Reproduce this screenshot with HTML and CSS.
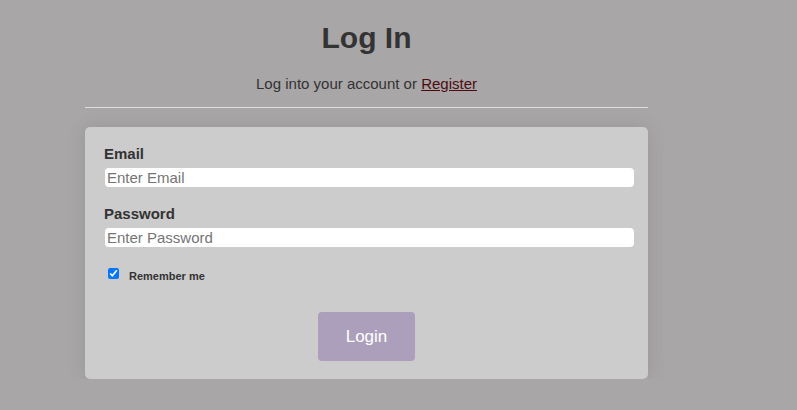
FILE: index.html
```html
<!DOCTYPE html>
<html lang="en">
<head>
<meta charset="utf-8">
<meta name="viewport" content="width=device-width, initial-scale=1">
<title>Log In</title>
<link rel="stylesheet" href="styles.css">
</head>
<body>
<main class="container">
  <header class="intro">
    <h1>Log In</h1>
    <p>Log into your account or <a href="#">Register</a></p>
  </header>
  <form class="card">
    <div class="field">
      <label for="email">Email</label>
      <input type="email" id="email" placeholder="Enter Email">
    </div>
    <div class="field">
      <label for="password">Password</label>
      <input type="password" id="password" placeholder="Enter Password">
    </div>
    <div class="remember">
      <input type="checkbox" id="remember" checked>
      <label for="remember">Remember me</label>
    </div>
    <button type="submit" class="submit">Login</button>
  </form>
</main>
</body>
</html>
```

FILE: styles.css
```css
* {
  box-sizing: border-box;
}

body {
  margin: 0;
  background: #a8a6a7;
  color: #333;
  font: 15px/20px "Liberation Sans", Arial, sans-serif;
}

.container {
  margin: 0 149px 0 85px;
  padding-top: 20px;
}

.intro {
  border-bottom: 1px solid #ddd;
  padding-bottom: 13px;
  text-align: center;
}

h1 {
  margin: 0 0 18px;
  font-size: 30px;
  line-height: 36px;
}

p {
  margin: 0;
}

a {
  color: #4d0b10;
}

.card {
  display: flex;
  flex-direction: column;
  margin-top: 19px;
  padding: 17px 14px 18px;
  border-radius: 5px;
  background: #ccc;
  box-shadow: 0 0 20px rgba(0, 0, 0, 0.1);
}

.field {
  display: flex;
  flex-direction: column;
  gap: 4px;
  margin-bottom: 17px;
  padding-left: 6px;
}

.field label {
  margin-left: -1px;
}

label {
  font-weight: bold;
}

.field input {
  width: 100%;
  height: 19px;
  padding: 0 2px;
  border: 0;
  border-radius: 4px;
  background: #fff;
  color: #333;
  font: inherit;
}

.field input::placeholder {
  color: #757575;
}

.remember {
  display: flex;
  align-items: center;
  gap: 10px;
  margin-top: 2px;
  padding-left: 9px;
  font-size: 11px;
}

.remember input {
  width: 11px;
  height: 11px;
  margin: 0 0 5px;
}

.submit {
  align-self: center;
  margin-top: 26px;
  padding: 14px 28px;
  border: 0;
  border-radius: 4px;
  background: #ac9fbb;
  color: #fff;
  font: 17px/21px "Liberation Sans", Arial, sans-serif;
}
```
